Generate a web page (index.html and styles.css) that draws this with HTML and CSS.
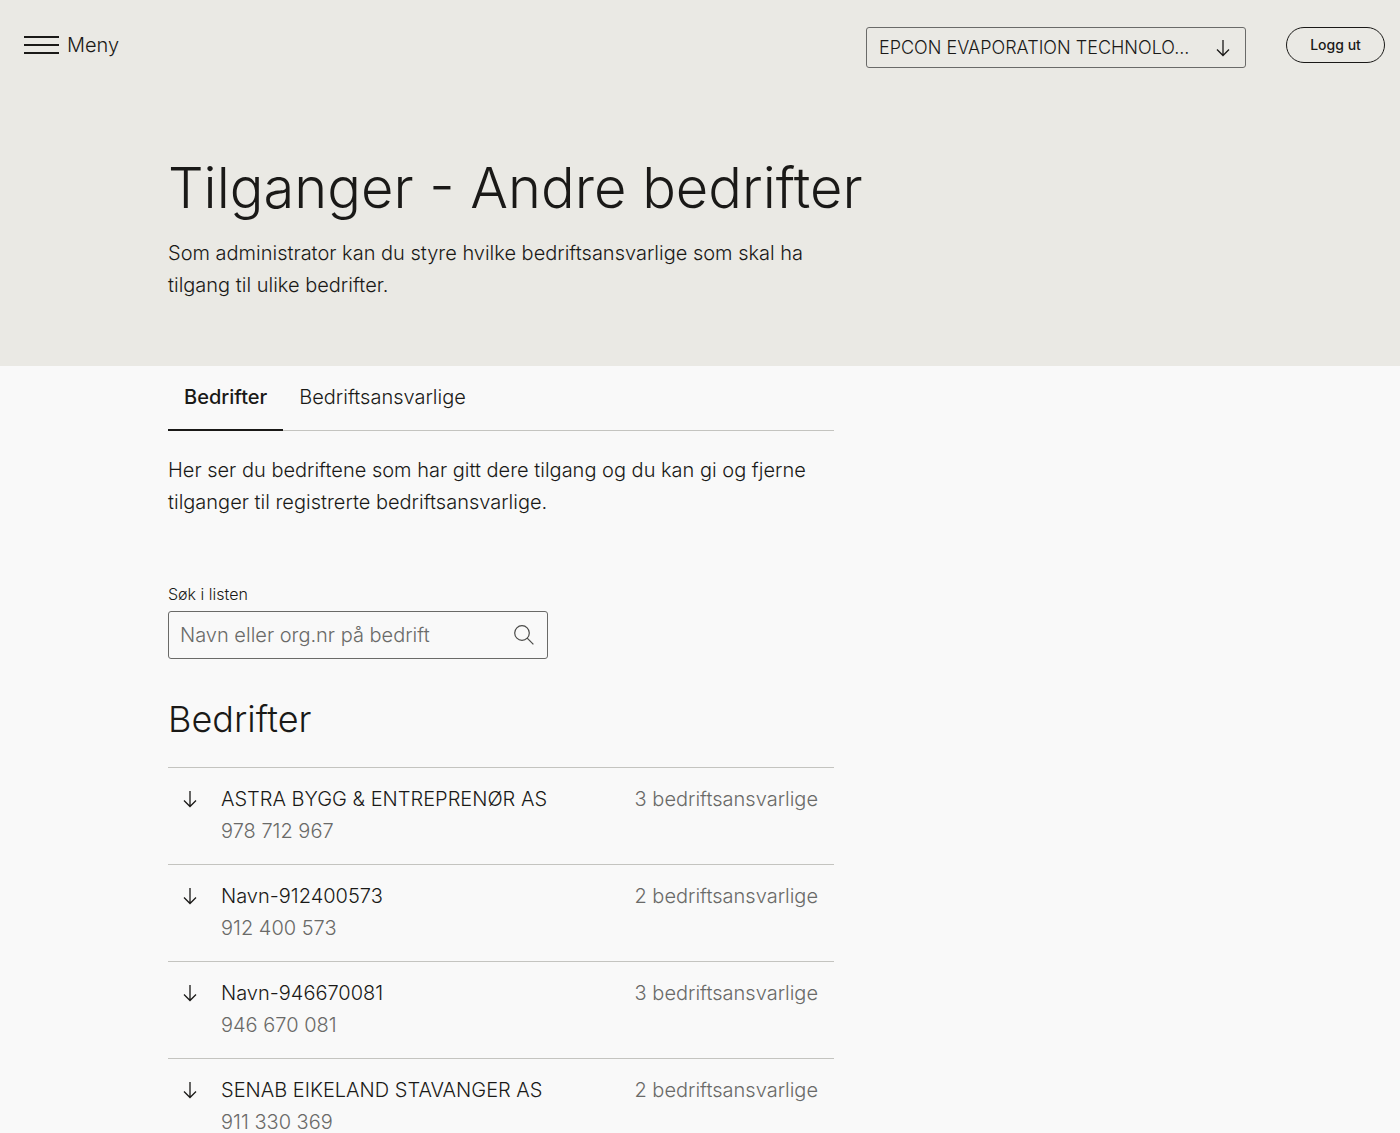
FILE: index.html
```html
<!DOCTYPE html>
<html lang="no">
<head>
<meta charset="utf-8">
<meta name="viewport" content="width=device-width, initial-scale=1">
<title>Tilganger - Andre bedrifter</title>
<link rel="stylesheet" href="styles.css">
</head>
<body>
<svg class="sprite" aria-hidden="true">
  <symbol id="arrow-down" viewBox="0 0 14 18"><path d="M7 1v15.500M1 10.500l6 6 6-6"/></symbol>
</svg>
<div class="hero">
  <header class="topbar">
    <button class="menu-button" type="button">
      <svg class="burger" viewBox="0 0 35 18" aria-hidden="true"><path d="M0 1h35M0 9h35M0 17h35"/></svg>
      Meny
    </button>
    <div class="company">
      <select class="company-select" aria-label="Velg bedrift">
        <option>EPCON EVAPORATION TECHNOLO...</option>
      </select>
      <svg class="arrow company-arrow" aria-hidden="true"><use href="#arrow-down"/></svg>
    </div>
    <button class="logout" type="button">Logg ut</button>
  </header>
  <div class="intro">
    <h1>Tilganger - Andre bedrifter</h1>
    <p>Som administrator kan du styre hvilke bedriftsansvarlige som skal ha tilgang til ulike bedrifter.</p>
  </div>
</div>
<main class="content">
  <nav class="tabs">
    <a class="tab tab-active" href="#bedrifter" aria-current="page">Bedrifter</a>
    <a class="tab" href="#bedriftsansvarlige">Bedriftsansvarlige</a>
  </nav>
  <p class="description">Her ser du bedriftene som har gitt dere tilgang og du kan gi og fjerne tilganger til registrerte bedriftsansvarlige.</p>
  <div class="search">
    <label class="search-label" for="search">Søk i listen</label>
    <div class="search-box">
      <input class="search-input" id="search" type="text" placeholder="Navn eller org.nr på bedrift">
      <svg class="search-icon" viewBox="0 0 20 20" aria-hidden="true"><circle cx="8" cy="8" r="7.300"/><path d="M13.200 13.200l6.200 6.200"/></svg>
    </div>
  </div>
  <h2 id="bedrifter">Bedrifter</h2>
  <ul class="list">
    <li><button class="row" type="button">
      <svg class="arrow" aria-hidden="true"><use href="#arrow-down"/></svg>
      <span class="name">ASTRA BYGG &amp; ENTREPRENØR AS</span>
      <span class="count">3 bedriftsansvarlige</span>
      <span class="number">978 712 967</span>
    </button></li>
    <li><button class="row" type="button">
      <svg class="arrow" aria-hidden="true"><use href="#arrow-down"/></svg>
      <span class="name">Navn-912400573</span>
      <span class="count">2 bedriftsansvarlige</span>
      <span class="number">912 400 573</span>
    </button></li>
    <li><button class="row" type="button">
      <svg class="arrow" aria-hidden="true"><use href="#arrow-down"/></svg>
      <span class="name">Navn-946670081</span>
      <span class="count">3 bedriftsansvarlige</span>
      <span class="number">946 670 081</span>
    </button></li>
    <li><button class="row" type="button">
      <svg class="arrow" aria-hidden="true"><use href="#arrow-down"/></svg>
      <span class="name">SENAB EIKELAND STAVANGER AS</span>
      <span class="count">2 bedriftsansvarlige</span>
      <span class="number">911 330 369</span>
    </button></li>
  </ul>
</main>
</body>
</html>
```
FILE: styles.css
```css
* { box-sizing: border-box; }

body {
  margin: 0;
  background: #f9f9f9;
  color: #1a1917;
  font: 300 20px/32px Inter, "Liberation Sans", sans-serif;
}

button, select, input { font: inherit; color: inherit; }
h1, h2, p, ul { margin: 0; padding: 0; font-weight: 300; }
.sprite { display: none; }

.arrow {
  width: 14px;
  height: 18px;
  fill: none;
  stroke: #1a1917;
  stroke-width: 1.3;
}

.hero { background: #eae9e4; padding-bottom: 65px; }

.topbar {
  display: flex;
  align-items: flex-start;
  gap: 40px;
  padding: 27px 15px 0 24px;
}

.menu-button {
  display: flex;
  align-items: center;
  gap: 8px;
  height: 36px;
  margin-right: auto;
  padding: 0;
  border: 0;
  background: none;
}

.burger {
  width: 35px;
  height: 18px;
  stroke: #1a1917;
  stroke-width: 2;
}

.company {
  display: grid;
  align-items: center;
  width: 380px;
}

.company-select, .company-arrow { grid-area: 1 / 1; }

.company-select {
  appearance: none;
  width: 100%;
  height: 41px;
  padding: 0 48px 0 12px;
  border: 1px solid #6a6a68;
  border-radius: 3px;
  background: none;
  font-size: 18px;
}

.company-arrow {
  justify-self: end;
  margin-right: 16px;
  pointer-events: none;
}

.logout {
  width: 99px;
  height: 36px;
  padding: 0;
  border: 1px solid #1a1917;
  border-radius: 18px;
  background: none;
  font-size: 14px;
  font-weight: 500;
}

.intro { margin-left: 12%; padding-top: 84px; }
.intro p { max-width: 666px; }

h1 { font-size: 56px; line-height: 72px; margin-bottom: 13px; }

.content { max-width: 666px; margin-left: 12%; }

.tabs {
  display: flex;
  height: 65px;
  box-shadow: inset 0 -1px #c4c4c0;
}

.tab {
  padding: 15px 16px 0;
  color: inherit;
  text-decoration: none;
}

.tab-active { border-bottom: 2px solid #1a1917; font-weight: 500; }

.description { margin-top: 23px; }

.search { max-width: 380px; margin-top: 64px; }

.search-label {
  display: block;
  font-size: 16px;
  line-height: 24px;
  margin-bottom: 5px;
}

.search-box {
  display: flex;
  align-items: center;
  height: 48px;
  padding: 0 13px 0 11px;
  border: 1px solid #6a6a68;
  border-radius: 3px;
}

.search-input {
  flex: 1;
  min-width: 0;
  padding: 0;
  border: 0;
  background: none;
  outline: 0;
}

.search-input::placeholder { color: #6a6a68; opacity: 1; }

.search-icon {
  width: 20px;
  height: 20px;
  fill: none;
  stroke: #4a4a48;
  stroke-width: 1.2;
}

h2 { margin: 36px 0 24px; font-size: 36px; line-height: 48px; }

.list { list-style: none; }

.row {
  display: grid;
  grid-template-columns: 14px 1fr auto;
  column-gap: 24px;
  align-items: center;
  width: 100%;
  padding: 15px 16px 17px 15px;
  border: 0;
  border-top: 1px solid #c4c4c0;
  background: none;
  text-align: left;
}

.number { grid-column: 2; }
.number, .count { color: #6a6a68; }
```
